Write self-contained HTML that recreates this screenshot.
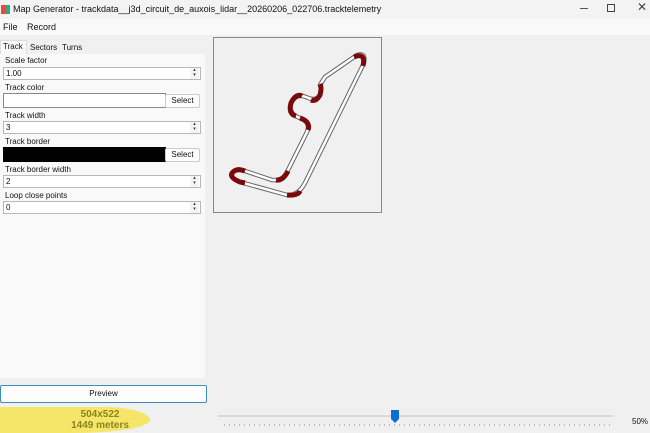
<!DOCTYPE html>
<html><head><style>
body{margin:0;width:650px;height:433px;background:#f0f0f0;font-family:"Liberation Sans",sans-serif;font-size:8px;color:#111;position:relative;overflow:hidden}
div,span{position:absolute;box-sizing:border-box}
.lbl{left:5px;font-size:8px}
.num{left:3px;width:198px;height:13px;background:#fff;border:1px solid #b8b8b8;padding:1px 2px;font-size:8px}
.num:after{content:"▴\A▾";white-space:pre;position:absolute;right:1px;top:0;width:9px;height:11px;font-size:5px;line-height:5px;text-align:center;color:#333;background:#f4f4f4}
.btn{width:35px;height:14px;background:#fdfdfd;border:1px solid #ccc;border-radius:2px;text-align:center;line-height:12px;font-size:8px}
</style></head><body>
<div style="left:0;top:0;width:650px;height:19px;background:#f3f3f3"></div>
<div style="left:1px;top:5px;width:9px;height:9px;background:linear-gradient(90deg,#e44 50%,#3a7 50%)"></div>
<div style="left:13px;top:4px;font-size:9px">Map Generator - trackdata__j3d_circuit_de_auxois_lidar__20260206_022706.tracktelemetry</div>
<div style="left:580px;top:8px;width:8px;height:1px;background:#555"></div>
<div style="left:607px;top:4px;width:8px;height:8px;border:1px solid #444"></div>
<div style="left:637px;top:0;font-size:12px;color:#444">✕</div>
<div style="left:0;top:19px;width:650px;height:16px;background:#f9f9f9"></div>
<div style="left:3px;top:22px;font-size:9px">File</div>
<div style="left:27px;top:22px;font-size:9px">Record</div>
<div style="left:0;top:40px;width:27px;height:15px;background:#f9f9f9;border:1px solid #ddd;border-bottom:none"></div>
<div style="left:3px;top:42px">Track</div>
<div style="left:30px;top:43px">Sectors</div>
<div style="left:62px;top:43px">Turns</div>
<div style="left:0;top:54px;width:205px;height:324px;background:#f9f9f9"></div>
<div class="lbl" style="top:56px">Scale factor</div>
<div class="num" style="top:67px">1.00</div>
<div class="lbl" style="top:83px">Track color</div>
<div style="left:3px;top:93px;width:163px;height:15px;background:#fff;border:1px solid #888"></div>
<div class="btn" style="left:165px;top:94px">Select</div>
<div class="lbl" style="top:111px">Track width</div>
<div class="num" style="top:121px">3</div>
<div class="lbl" style="top:137px">Track border</div>
<div style="left:3px;top:147px;width:163px;height:15px;background:#000"></div>
<div class="btn" style="left:165px;top:148px">Select</div>
<div class="lbl" style="top:165px">Track border width</div>
<div class="num" style="top:175px">2</div>
<div class="lbl" style="top:191px">Loop close points</div>
<div class="num" style="top:201px">0</div>
<div style="left:0;top:385px;width:207px;height:18px;background:#fdfdfd;border:1px solid #3a8fbf;border-radius:2px;text-align:center;line-height:16px">Preview</div>
<div style="left:0;top:407px;width:150px;height:26px;background:#f5e66a;border-radius:0 30% 50% 0/0 50% 50% 0"></div>
<div style="left:0;top:409px;width:200px;text-align:center;font-size:10px;font-weight:bold;color:#8a8420;line-height:11px">504x522<br>1449 meters</div>
<div style="left:213px;top:37px;width:169px;height:176px;border:1px solid #888;background:#f0f0f0"></div>
<svg style="position:absolute;left:0;top:0" width="650" height="433">
<path d="M325,77 L357,55 Q366,52 364,63 L305,183 Q298,196 287,195 L240,182 Q228,177 233,172 Q237,168 242,170 L272,180 Q283,181 287,172 L307,132 Q311,122 300,118 Q288,114 291,103 Q296,93 306,97 Q316,102 320,95 Q322,88 320,85 Z" fill="none" stroke="#666" stroke-width="4.5" stroke-linejoin="round"/>
<path d="M325,77 L357,55 Q366,52 364,63 L305,183 Q298,196 287,195 L240,182 Q228,177 233,172 Q237,168 242,170 L272,180 Q283,181 287,172 L307,132 Q311,122 300,118 Q288,114 291,103 Q296,93 306,97 Q316,102 320,95 Q322,88 320,85 Z" fill="none" stroke="#fff" stroke-width="2.5" stroke-linejoin="round"/>
<g fill="none" stroke="#7a0a0a" stroke-width="5" stroke-linecap="butt">
<path d="M354,57 Q366,52 363,66"/>
<path d="M300,191 Q298,196 287,195"/>
<path d="M245,183 L240,182 Q228,177 233,172 Q237,168 245,171"/>
<path d="M276,180 Q283,181 288,171"/>
<path d="M308,130 Q311,122 300,118"/>
<path d="M296,116 Q288,114 291,103 Q296,93 302,96"/>
<path d="M311,100 Q316,102 320,95 Q322,88 320,84"/>
</g>
<line x1="218" y1="416" x2="613" y2="416" stroke="#d8d8d8" stroke-width="2"/>
<line x1="224" y1="425" x2="610" y2="425" stroke="#bbb" stroke-width="2" stroke-dasharray="1 4"/>
<path d="M391,410 h8 v9 l-4,4 l-4,-4 z" fill="#0a6fd1"/>
</svg>
<div style="left:632px;top:417px;font-size:8px">50%</div>
</body></html>
